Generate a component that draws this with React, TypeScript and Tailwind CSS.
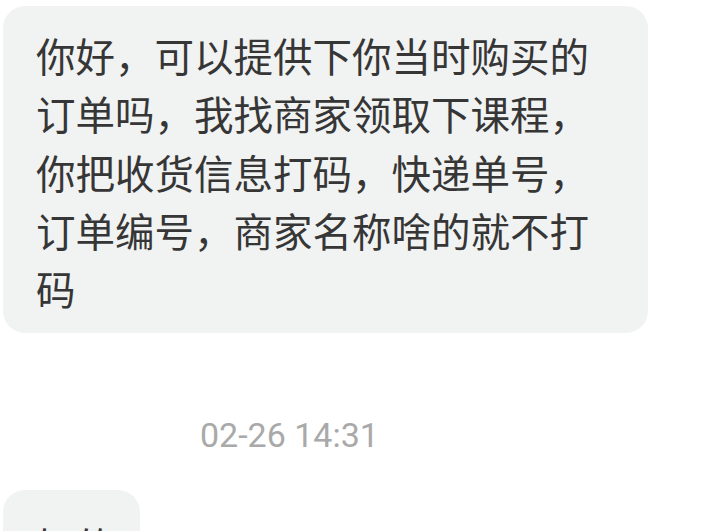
export default function App() {
  return (
    <div
      className="h-[531px] w-[720px] overflow-hidden bg-white"
      style={{ fontFamily: '"Noto Sans CJK SC", "Noto Sans", sans-serif' }}
    >
      <div className="pl-[3px] pt-[6px]">
        <div className="w-[645px] rounded-[22px] bg-[#f1f2f2] pb-[16px] pl-[33px] pr-[40px] pt-[20px]">
          <p className="text-[39.5px] leading-[58.3px] text-[#363636]">
            你好，可以提供下你当时购买的订单吗，我找商家领取下课程，你把收货信息打码，快递单号，订单编号，商家名称啥的就不打码
          </p>
        </div>
      </div>

      <div
        className="mt-[82px] pl-[200px] text-[34px] leading-[40px] text-[#a9a9a9]"
        style={{ fontFamily: 'Roboto, "Noto Sans", sans-serif' }}
      >
        02-26 14:31
      </div>

      <div className="mt-[35px] pl-[3px]">
        <div className="inline-block rounded-[22px] bg-[#f1f2f2] pl-[33px] pr-[25px] pt-[26px]">
          <p className="text-[39.5px] leading-[58px] text-[#363636]">好的</p>
        </div>
      </div>
    </div>
  );
}
